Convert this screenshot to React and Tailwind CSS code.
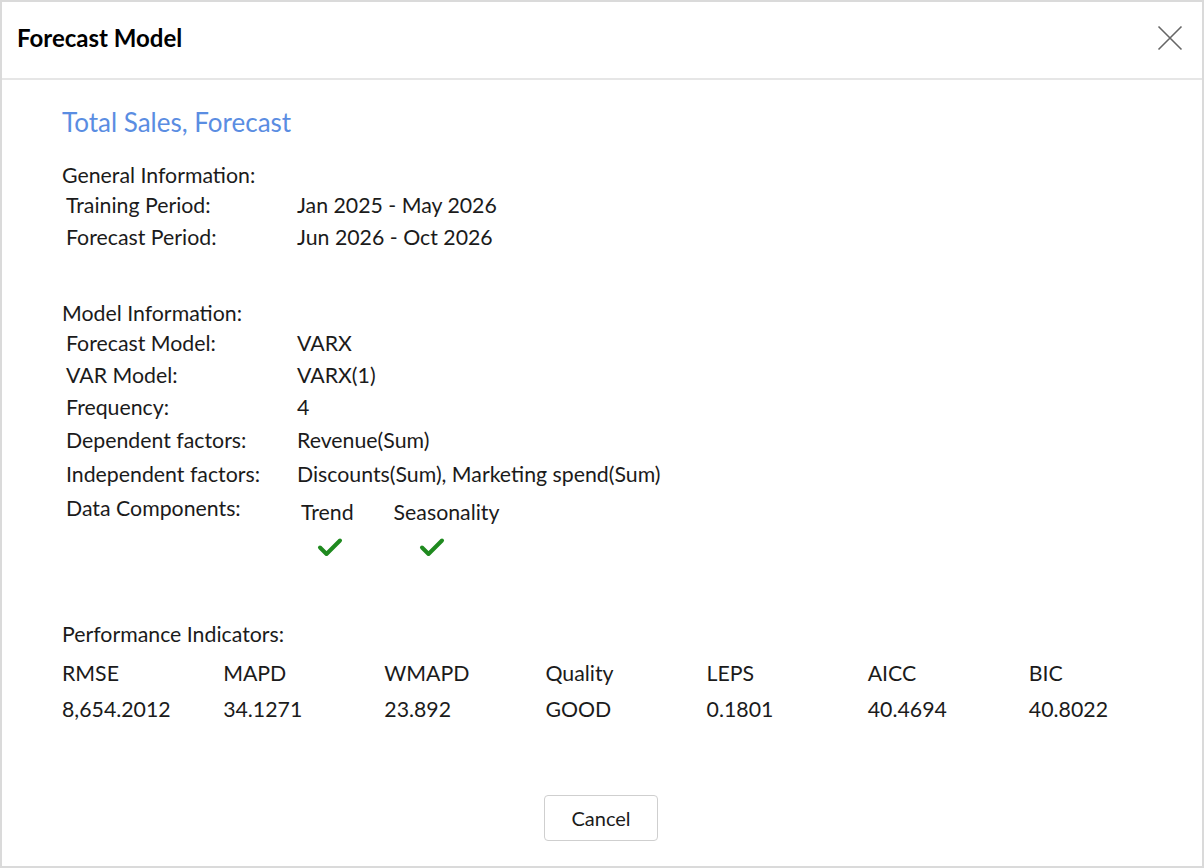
import React from "react";

const Check = () => (
  <svg width="26" height="20" viewBox="0 0 26 20" fill="none">
    <path d="M3 10.5 L9.5 17 L23 3.5" stroke="#1f8a1f" strokeWidth="4" strokeLinecap="round" strokeLinejoin="round" />
  </svg>
);

const Row = ({ label, value, h = "h-[32px]" }) => (
  <div className={`flex items-center ${h} pl-[4px]`}>
    <div className="w-[231px]">{label}</div>
    <div>{value}</div>
  </div>
);

export default function App() {
  const metrics = [
    ["RMSE", "8,654.2012"],
    ["MAPD", "34.1271"],
    ["WMAPD", "23.892"],
    ["Quality", "GOOD"],
    ["LEPS", "0.1801"],
    ["AICC", "40.4694"],
    ["BIC", "40.8022"],
  ];
  return (
    <div
      className="w-[1204px] h-[868px] border-2 border-[#dadada] bg-white flex flex-col text-[#1b1b1b]"
      style={{ fontFamily: "Lato, 'Open Sans', sans-serif" }}
    >
      <div className="h-[78px] shrink-0 border-b-2 border-[#e6e6e6] flex items-center justify-between pl-[15px] pr-[19px]">
        <div className="text-[24px] font-bold text-black mt-[-4px]">Forecast Model</div>
        <svg width="26" height="26" viewBox="0 0 26 26" className="mt-[-4px]">
          <path d="M1.5 1.5 L24.5 24.5 M24.5 1.5 L1.5 24.5" stroke="#666" strokeWidth="1.6" />
        </svg>
      </div>
      <div className="flex-1 flex flex-col pl-[60px] text-[21.3px]">
        <div className="mt-[26px] h-[32px] flex items-center text-[26px] text-[#5a8de2]">
          Total Sales, Forecast
        </div>
        <div className="mt-[24px] h-[28px] flex items-center">General Information:</div>
        <Row label="Training Period:" value="Jan 2025 - May 2026" />
        <Row label="Forecast Period:" value="Jun 2026 - Oct 2026" />

        <div className="mt-[45px] h-[29px] flex items-center">Model Information:</div>
        <Row label="Forecast Model:" value="VARX" h="h-[32px]" />
        <Row label="VAR Model:" value="VARX(1)" h="h-[32px]" />
        <Row label="Frequency:" value="4" h="h-[32px]" />
        <Row label="Dependent factors:" value="Revenue(Sum)" h="h-[34px]" />
        <Row label="Independent factors:" value="Discounts(Sum), Marketing spend(Sum)" h="h-[33px]" />
        <div className="flex pl-[4px] mt-[2px]">
          <div className="w-[235px] h-[32px] flex items-center">Data Components:</div>
          <div className="flex gap-[40px] pt-[4px]">
            <div className="flex flex-col">
              <div className="h-[32px] flex items-center">Trend</div>
              <div className="h-[36px] flex items-center pl-[16px]">
                <Check />
              </div>
            </div>
            <div className="flex flex-col">
              <div className="h-[32px] flex items-center">Seasonality</div>
              <div className="h-[36px] flex items-center pl-[25px]">
                <Check />
              </div>
            </div>
          </div>
        </div>

        <div className="mt-[55px] h-[30px] flex items-center">Performance Indicators:</div>
        <div className="grid grid-cols-7 w-[1128px] mt-[6px]">
          {metrics.map(([k, v]) => (
            <div key={k} className="flex flex-col">
              <div className="h-[36px] flex items-center">{k}</div>
              <div className="h-[36px] flex items-center">{v}</div>
            </div>
          ))}
        </div>

        <div className="flex justify-center pr-[62px] mt-[67px]">
          <button className="w-[114px] h-[46px] border border-[#cfcfcf] rounded-[4px] bg-white text-[20px] text-[#1b1b1b]">
            Cancel
          </button>
        </div>
      </div>
    </div>
  );
}
